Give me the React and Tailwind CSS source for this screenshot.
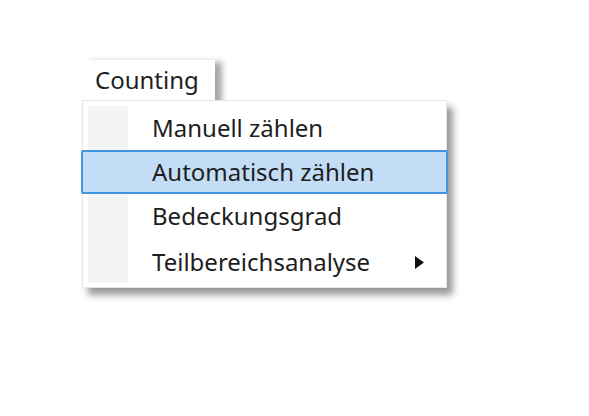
import React from "react";

function MenuItem({ label, active, submenu, tall }) {
  return (
    <div
      className={`relative flex items-center pr-[22px] ${tall ? "h-[48px]" : "h-[44px]"} ${
        active
          ? "pl-[69px] bg-[#c2ddf5] border-2 border-[#4195de] rounded-[2px] -mx-[2px]"
          : "pl-[67px] border-2 border-transparent"
      }`}
    >
      <span className="flex-1 text-[24px] leading-none text-[#1e1e1e] whitespace-nowrap">{label}</span>
      {submenu && (
        <svg width="9" height="13" viewBox="0 0 9 13" className="mr-[-2px]">
          <polygon points="0,0 9,6.5 0,13" fill="#111" />
        </svg>
      )}
    </div>
  );
}

export default function App() {
  return (
    <div
      className="w-[589px] h-[416px] bg-white pt-[60px] pl-[82px]"
      style={{ fontFamily: '"Noto Sans", "Open Sans", sans-serif' }}
    >
      <div className="ml-[1px] w-[132px] h-[43px] bg-white shadow-[7px_2px_6px_rgba(0,0,0,0.35)] flex items-center pl-[12px] pb-[4px]">
        <span className="text-[24px] leading-none text-[#1e1e1e]">Counting</span>
      </div>
      <div className="relative z-10 -mt-[3px] w-[365px] bg-white border border-[#e6e6e6] shadow-[6px_7px_7px_rgba(0,0,0,0.4)] pt-[5px] pb-[1px]">
        <div className="absolute left-[5px] top-[5px] bottom-[4px] w-[40px] bg-[#f4f4f4]" />
        <MenuItem label="Manuell zählen" />
        <MenuItem label="Automatisch zählen" active />
        <MenuItem label="Bedeckungsgrad" />
        <MenuItem label="Teilbereichsanalyse" submenu tall />
      </div>
    </div>
  );
}
